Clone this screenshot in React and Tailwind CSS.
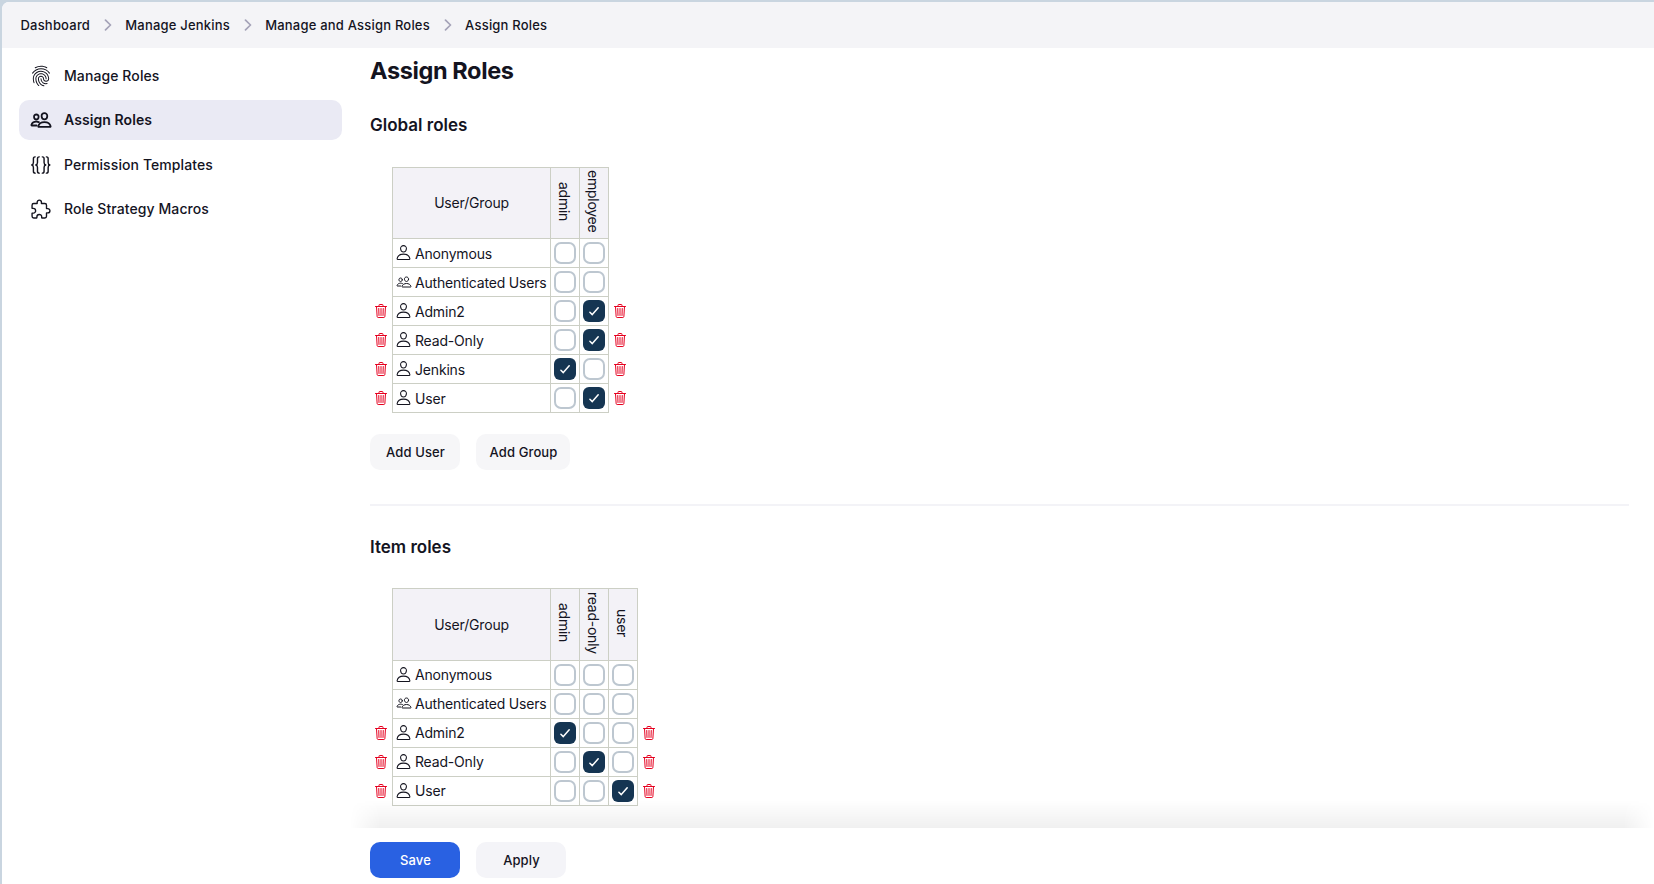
import React from "react";
import {
  IoFingerPrintOutline,
  IoPeopleOutline,
  IoPersonOutline,
  IoTrashOutline,
  IoExtensionPuzzleOutline,
} from "react-icons/io5";

const crumbs = ["Dashboard", "Manage Jenkins", "Manage and Assign Roles", "Assign Roles"];

const BRACE = "M3.500 0C2.200 0 1.900.6 1.900 1.700v3.500c0 1.300-.5 1.900-1.500 2.200 1 .3 1.500.9 1.500 2.200v3.500c0 1.100.3 1.700 1.600 1.700";

function BracesIcon({ className }) {
  return (
    <svg viewBox="0 0 20 20" className={className} fill="none" stroke="currentColor" strokeWidth="1.3" strokeLinecap="round" strokeLinejoin="round">
      <path d={BRACE} transform="translate(1.200 2.600)" />
      <path d={BRACE} transform="translate(4.900 2.600)" />
      <path d={BRACE} transform="translate(14.700 2.600) scale(-1 1)" />
      <path d={BRACE} transform="translate(18.400 2.600) scale(-1 1)" />
    </svg>
  );
}

const navItems = [
  { label: "Manage Roles", Icon: IoFingerPrintOutline },
  { label: "Assign Roles", Icon: IoPeopleOutline, active: true },
  { label: "Permission Templates", Icon: BracesIcon },
  { label: "Role Strategy Macros", Icon: IoExtensionPuzzleOutline },
];

const globalRoles = {
  roles: ["admin", "employee"],
  rows: [
    { name: "Anonymous", checked: [] },
    { name: "Authenticated Users", group: true, checked: [] },
    { name: "Admin2", checked: ["employee"], removable: true },
    { name: "Read-Only", checked: ["employee"], removable: true },
    { name: "Jenkins", checked: ["admin"], removable: true },
    { name: "User", checked: ["employee"], removable: true },
  ],
};

const itemRoles = {
  roles: ["admin", "read-only", "user"],
  rows: [
    { name: "Anonymous", checked: [] },
    { name: "Authenticated Users", group: true, checked: [] },
    { name: "Admin2", checked: ["admin"], removable: true },
    { name: "Read-Only", checked: ["read-only"], removable: true },
    { name: "User", checked: ["user"], removable: true },
  ],
};

function Checkbox({ checked }) {
  if (!checked) {
    return <span className="block size-[22px] rounded-[7px] border-2 border-[#bdc7d0] bg-white" />;
  }
  return (
    <span className="flex size-[22px] items-center justify-center rounded-[6px] bg-[#153552]">
      <svg viewBox="0 0 22 22" className="size-[22px]" fill="none" stroke="white" strokeWidth="1.5" strokeLinecap="round" strokeLinejoin="round">
        <path d="M6.900 12.200 9.300 14.600 15.200 7.800" />
      </svg>
    </span>
  );
}

function Trash() {
  return <IoTrashOutline className="size-4 text-[#e6001f]" />;
}

function RoleTable({ data, headHeight, namePadding = "" }) {
  return (
    <div className="flex w-max flex-col text-[14px] tracking-[-0.18px]">
      <div className="flex">
        <div className="w-[22px]" />
        <div className={`flex border-t border-l border-[#cccfc5] bg-[#f3f2f7] ${headHeight}`}>
          <div className="flex w-[158px] items-center justify-center border-r border-b border-[#cccfc5] pb-px">
            User/Group
          </div>
          {data.roles.map((role) => (
            <div key={role} className="flex w-[29px] items-center justify-center border-r border-b border-[#cccfc5] pr-[2px] pb-[3px]">
              <span className="leading-[22px] tracking-[-0.250px] whitespace-nowrap [writing-mode:vertical-rl]">{role}</span>
            </div>
          ))}
        </div>
      </div>
      {data.rows.map((row) => (
        <div key={row.name} className="flex h-[29px]">
          <div className="flex w-[22px] items-center pb-px pl-[3px]">{row.removable && <Trash />}</div>
          <div className="flex border-l border-[#cccfc5]">
            <div className={`flex w-[158px] items-center border-r border-b border-[#cccfc5] pl-[2px] ${namePadding}`}>
              <span className="mb-px flex size-[17px] shrink-0 items-center justify-center">
                {row.group ? <IoPeopleOutline className="size-4" /> : <IoPersonOutline className="size-[17px]" />}
              </span>
              <span className="ml-[3px] whitespace-nowrap">{row.name}</span>
            </div>
            {data.roles.map((role) => (
              <div key={role} className="flex w-[29px] items-center justify-center border-r border-b border-[#cccfc5]">
                <Checkbox checked={row.checked.includes(role)} />
              </div>
            ))}
          </div>
          <div className="flex items-center pb-px pl-[3px]">{row.removable && <Trash />}</div>
        </div>
      ))}
    </div>
  );
}

function Button({ children, className }) {
  return (
    <button type="button" className={`flex h-9 items-center justify-center rounded-[10px] pt-px pl-px text-[13px] font-medium tracking-[0.12px] ${className}`}>
      {children}
    </button>
  );
}

export default function App() {
  return (
    <div className="h-[884px] w-[1654px] overflow-hidden bg-[#c9d5e0] pt-[2px] pl-[2px] font-['Inter','Liberation_Sans',sans-serif] text-[#14141f]">
      <div className="flex h-full flex-col overflow-hidden rounded-tl-[7px] bg-white">
        <nav className="flex h-[46px] shrink-0 items-center bg-[#f4f4f7] pl-[18.500px] text-[13px] font-medium tracking-[0.2px]">
          {crumbs.map((c, i) => (
            <React.Fragment key={c}>
              {i > 0 && (
                <svg viewBox="0 0 8 12" className="mx-[13.600px] h-3 w-2" fill="none" stroke="#a5a3b8" strokeWidth="1.700" strokeLinecap="round" strokeLinejoin="round">
                  <path d="M1.500 1.200 6.500 6 1.500 10.800" />
                </svg>
              )}
              <span className="pt-px">{c}</span>
            </React.Fragment>
          ))}
        </nav>

        <div className="flex min-h-0 flex-1">
          <aside className="flex w-[348px] shrink-0 flex-col gap-[4.400px] pt-[8px] pl-[17px]">
            {navItems.map(({ label, Icon, active }) => (
              <a
                key={label}
                className={`flex h-10 w-[323px] shrink-0 items-center rounded-[10px] pl-[11px] text-[14px] ${
                  active ? "bg-[#eaeaf4] font-semibold tracking-[0.08px]" : "font-medium tracking-[0.09px]"
                }`}
              >
                <Icon className={`size-[22px] ${active ? "[&_path]:stroke-[42px]" : ""}`} />
                <span className="ml-3 pb-px">{label}</span>
              </a>
            ))}
          </aside>

          <main className="flex min-w-0 flex-1 flex-col">
            <div className="flex min-h-0 flex-1 flex-col overflow-hidden pr-[25px] pl-5">
              <h1 className="mt-[7px] h-8 text-[23.500px] leading-8 font-bold tracking-[-0.38px]">Assign Roles</h1>
              <h2 className="mt-[26px] h-6 text-[17px] leading-6 font-semibold">Global roles</h2>
              <div className="mt-[30px]">
                <RoleTable data={globalRoles} headHeight="h-[72px]" />
              </div>
              <div className="mt-[21px] flex gap-4">
                <Button className="w-[90px] bg-[#f6f6f8]">Add User</Button>
                <Button className="w-[94px] bg-[#f6f6f8]">Add Group</Button>
              </div>
              <hr className="mt-[34px] h-[2px] shrink-0 border-0 bg-[#f3f3f7]" />
              <h2 className="mt-[29px] h-6 text-[17px] leading-6 font-semibold">Item roles</h2>
              <div className="mt-[29px] shrink-0">
                <RoleTable data={itemRoles} headHeight="h-[73px]" namePadding="pb-px" />
              </div>
            </div>
            <footer className="relative flex h-14 shrink-0 gap-4 bg-white pt-[14px] pl-5">
              <div className="pointer-events-none absolute bottom-full left-0 h-7 w-full bg-linear-to-t from-black/6 to-transparent [mask-image:linear-gradient(to_right,transparent,black_30px,black_calc(100%_-_30px),transparent)]" />
              <Button className="w-[90px] bg-[#2961e2] text-white">Save</Button>
              <Button className="w-[90px] bg-[#f4f4f8]">Apply</Button>
            </footer>
          </main>
        </div>
      </div>
    </div>
  );
}
